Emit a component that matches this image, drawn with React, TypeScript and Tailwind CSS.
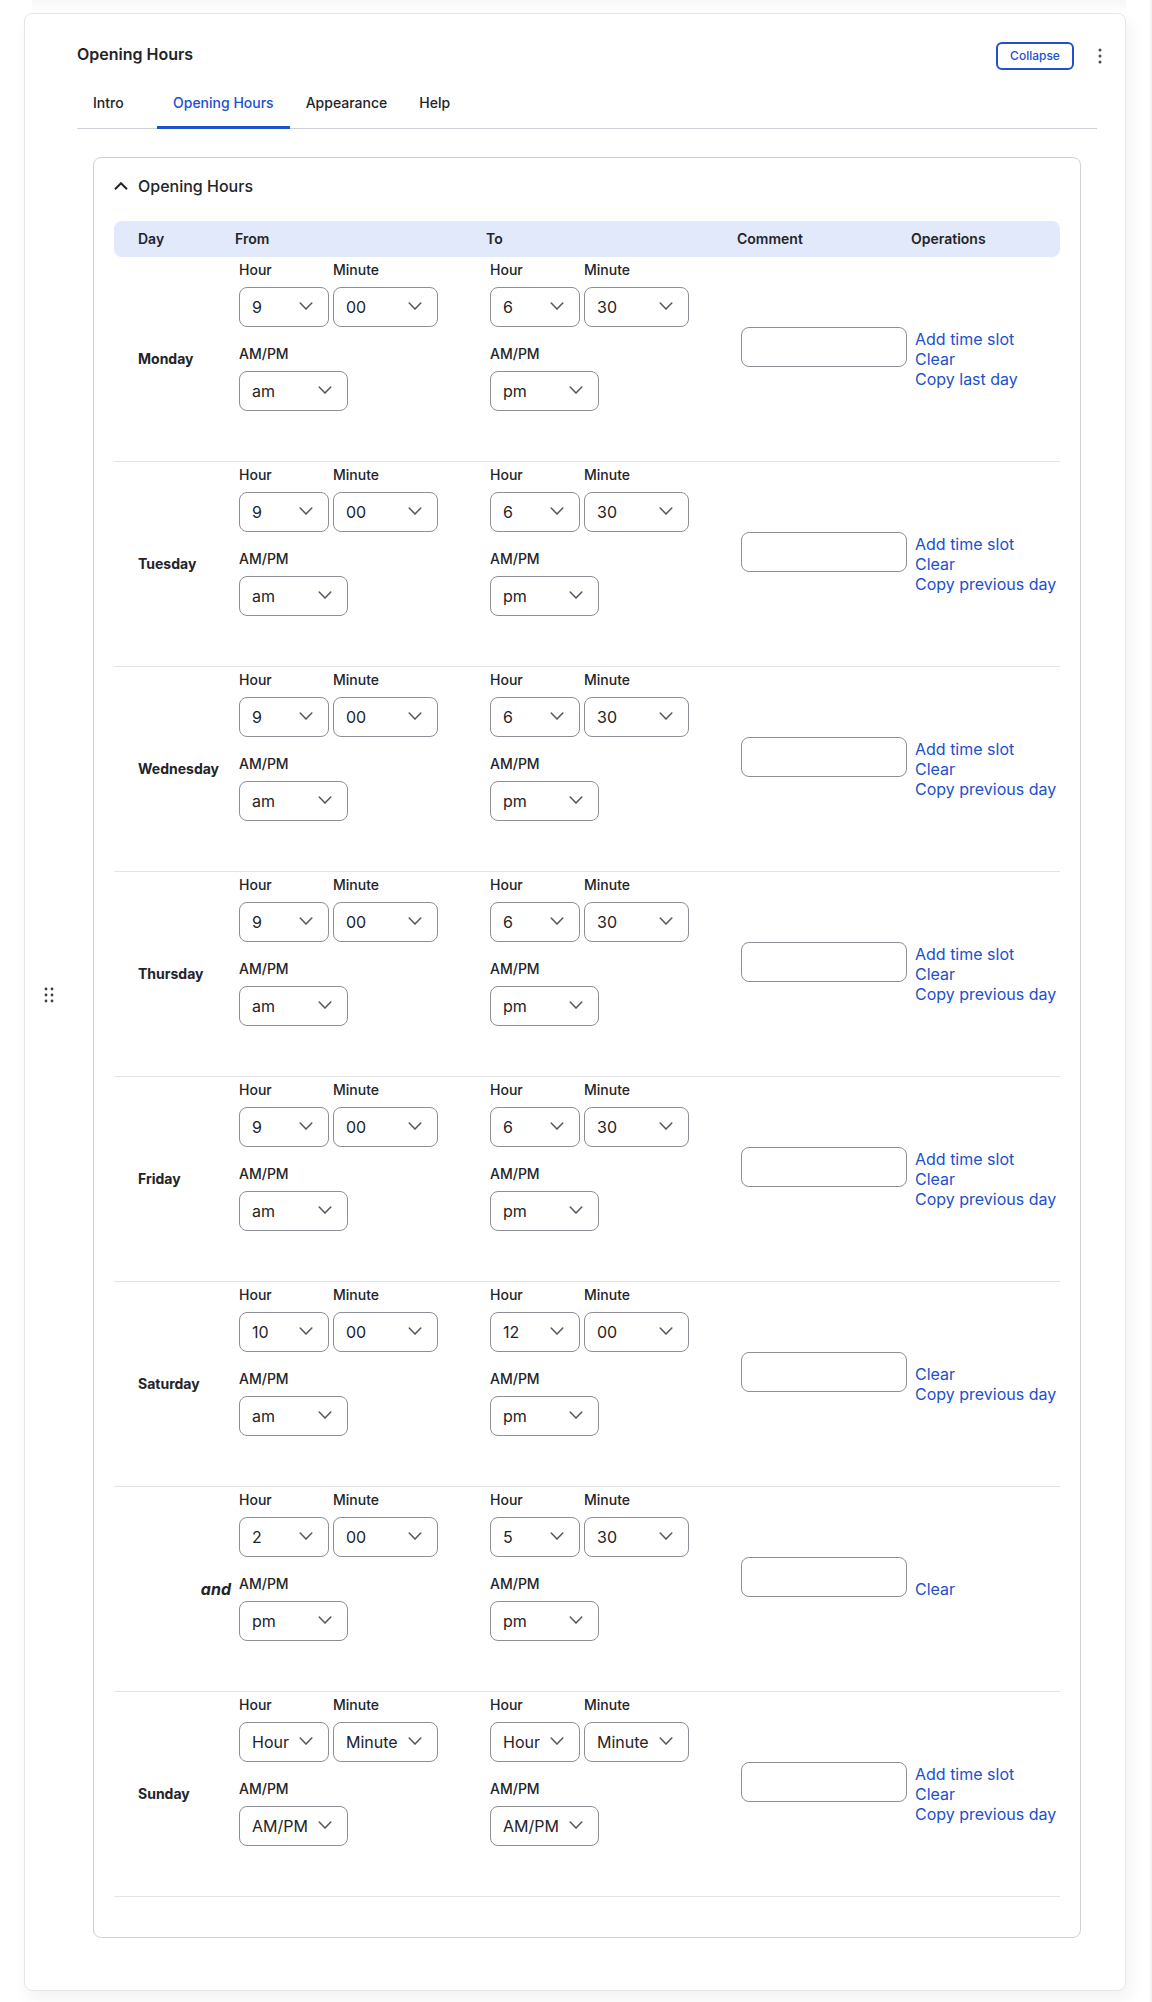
import { useState } from 'react';

type Time = { hour: string; minute: string; ampm: string };

type Slot = {
  id: string;
  day?: string;
  from: Time;
  to: Time;
  operations: string[];
};

const HOURS = ['Hour', '1', '2', '3', '4', '5', '6', '7', '8', '9', '10', '11', '12'];
const MINUTES = ['Minute', '00', '15', '30', '45'];
const AMPM = ['AM/PM', 'am', 'pm'];

const TABS = ['Intro', 'Opening Hours', 'Appearance', 'Help'];

const OPEN: Time = { hour: '9', minute: '00', ampm: 'am' };
const CLOSE: Time = { hour: '6', minute: '30', ampm: 'pm' };
const EMPTY: Time = { hour: 'Hour', minute: 'Minute', ampm: 'AM/PM' };
const ALL_OPS = ['Add time slot', 'Clear', 'Copy previous day'];

const SLOTS: Slot[] = [
  { id: 'mon', day: 'Monday', from: OPEN, to: CLOSE, operations: ['Add time slot', 'Clear', 'Copy last day'] },
  { id: 'tue', day: 'Tuesday', from: OPEN, to: CLOSE, operations: ALL_OPS },
  { id: 'wed', day: 'Wednesday', from: OPEN, to: CLOSE, operations: ALL_OPS },
  { id: 'thu', day: 'Thursday', from: OPEN, to: CLOSE, operations: ALL_OPS },
  { id: 'fri', day: 'Friday', from: OPEN, to: CLOSE, operations: ALL_OPS },
  {
    id: 'sat',
    day: 'Saturday',
    from: { hour: '10', minute: '00', ampm: 'am' },
    to: { hour: '12', minute: '00', ampm: 'pm' },
    operations: ['Clear', 'Copy previous day'],
  },
  {
    id: 'sat-2',
    from: { hour: '2', minute: '00', ampm: 'pm' },
    to: { hour: '5', minute: '30', ampm: 'pm' },
    operations: ['Clear'],
  },
  { id: 'sun', day: 'Sunday', from: EMPTY, to: EMPTY, operations: ALL_OPS },
];

function Select({ id, label, value, options, width }: {
  id: string;
  label: string;
  value: string;
  options: string[];
  width: string;
}) {
  return (
    <div className={width}>
      <label htmlFor={id} className="block mb-2 text-sm leading-[18px] font-medium">
        {label}
      </label>
      <div className="relative">
        <select
          id={id}
          defaultValue={value}
          className="block w-full h-10 pl-3 pr-8 appearance-none rounded-lg border border-[#8e8f95] bg-white text-base"
        >
          {options.map((o) => (
            <option key={o}>{o}</option>
          ))}
        </select>
        <svg
          viewBox="0 0 14 8"
          className="pointer-events-none absolute right-4 top-[15px] w-3.5 h-2"
          fill="none"
          stroke="#55565b"
          strokeWidth="1.5"
          strokeLinecap="round"
        >
          <path d="M1.2 1L7 7l5.8-6" />
        </svg>
      </div>
    </div>
  );
}

function TimeFields({ id, time }: { id: string; time: Time }) {
  return (
    <div className="flex flex-wrap gap-x-1 gap-y-[18px]">
      <Select id={`${id}-hour`} label="Hour" value={time.hour} options={HOURS} width="w-[90px]" />
      <Select id={`${id}-minute`} label="Minute" value={time.minute} options={MINUTES} width="w-[105px]" />
      <Select id={`${id}-ampm`} label="AM/PM" value={time.ampm} options={AMPM} width="w-[109px]" />
    </div>
  );
}

function SlotRow({ slot }: { slot: Slot }) {
  return (
    <tr className="border-b border-[#e3e4e8]">
      {slot.day ? (
        <th scope="row" className="pl-6 text-left text-sm font-bold">
          {slot.day}
        </th>
      ) : (
        <td className="pr-1 text-right text-base font-bold italic">and</td>
      )}
      <td className="px-1 pt-1 pb-[50px]">
        <TimeFields id={`${slot.id}-from`} time={slot.from} />
      </td>
      <td className="px-1 pt-1 pb-[50px]">
        <TimeFields id={`${slot.id}-to`} time={slot.to} />
      </td>
      <td className="px-1 pb-6">
        <input
          type="text"
          aria-label="Comment"
          className="block w-full h-10 px-3 rounded-lg border border-[#8e8f95] bg-white text-base"
        />
      </td>
      <td className="pl-1">
        <ul className="text-base leading-5 text-[#2150cd] whitespace-nowrap">
          {slot.operations.map((op) => (
            <li key={op}>
              <a href="#">{op}</a>
            </li>
          ))}
        </ul>
      </td>
    </tr>
  );
}

export default function App() {
  const [active, setActive] = useState('Opening Hours');
  const [open, setOpen] = useState(true);

  return (
    <div className="min-h-screen border-r-2 border-[#f3f3f5] bg-white font-['Inter',sans-serif] text-[#232429]">
      {/* Shadow of the paragraph above */}
      <div className="h-[13px] ml-8 mr-6 bg-linear-to-b from-[#f7f7fa] to-white" />

      <section className="mx-6 flex rounded-lg border border-[#e6e6e9] pb-3.5 shadow-[4px_8px_16px_rgba(34,35,48,0.06)]">
        {/* Drag handle */}
        <button type="button" aria-label="Drag to re-order" className="w-[52px] shrink-0 self-stretch flex items-center pl-[18px]">
          <svg viewBox="0 0 12 18" className="w-3 h-[18px]" fill="#3d3e47">
            {[3, 9, 15].map((y) => (
              <g key={y}>
                <circle cx="3" cy={y} r="1.4" />
                <circle cx="9" cy={y} r="1.4" />
              </g>
            ))}
          </svg>
        </button>

        <div className="min-w-0 flex-1 pt-7 pb-[38px]">
          <header className="flex items-start justify-between pr-[17px]">
            <h2 className="text-base font-semibold">Opening Hours</h2>
            <div className="flex items-center gap-[18px]">
              <button
                type="button"
                className="h-7 w-[78px] rounded-md border-2 border-[#2150cd] text-xs font-medium text-[#2150cd]"
              >
                Collapse
              </button>
              <button type="button" aria-label="More actions">
                <svg viewBox="0 0 16 18" className="w-4 h-[18px]" fill="#4b4c52">
                  <circle cx="8" cy="3" r="1.5" />
                  <circle cx="8" cy="9" r="1.5" />
                  <circle cx="8" cy="15" r="1.5" />
                </svg>
              </button>
            </div>
          </header>

          <div className="pr-7">
            {/* Tabs */}
            <nav className="mt-[7px] flex shadow-[inset_0_-1px_0_#d0d1d6]">
              {TABS.map((tab) => (
                <a
                  key={tab}
                  href="#"
                  onClick={() => setActive(tab)}
                  className={
                    tab === active
                      ? 'min-w-20 h-[52px] px-4 pt-4 border-b-[3px] border-[#2150cd] text-sm font-medium text-[#2150cd]'
                      : 'min-w-20 h-[52px] px-4 pt-4 text-sm font-medium'
                  }
                >
                  {tab}
                </a>
              ))}
            </nav>

            <div className="mx-4 mt-7 rounded-lg border border-[#d0d1d6] px-5 pt-4 pb-10">
              <button
                type="button"
                aria-expanded={open}
                onClick={() => setOpen(!open)}
                className="flex h-6 items-center gap-3 text-base font-medium"
              >
                <svg viewBox="0 0 14 8" className="w-3.5 h-2 -mr-0.5" fill="none" stroke="#232429" strokeWidth="2">
                  <path d="M1 7.2l6-6 6 6" />
                </svg>
                Opening Hours
              </button>

              {open && (
                <table className="mt-[23px] w-full table-fixed border-collapse">
                  <thead>
                    <tr className="h-9 text-left text-sm">
                      <th className="w-[121px] rounded-l-lg bg-[#e1e9fb] pl-6 font-semibold">Day</th>
                      <th className="w-[251px] bg-[#e1e9fb] font-semibold">From</th>
                      <th className="w-[251px] bg-[#e1e9fb] font-semibold">To</th>
                      <th className="w-[174px] bg-[#e1e9fb] font-semibold">Comment</th>
                      <th className="rounded-r-lg bg-[#e1e9fb] font-semibold">Operations</th>
                    </tr>
                  </thead>
                  <tbody>
                    {SLOTS.map((slot) => (
                      <SlotRow key={slot.id} slot={slot} />
                    ))}
                  </tbody>
                </table>
              )}
            </div>
          </div>
        </div>
      </section>
    </div>
  );
}
